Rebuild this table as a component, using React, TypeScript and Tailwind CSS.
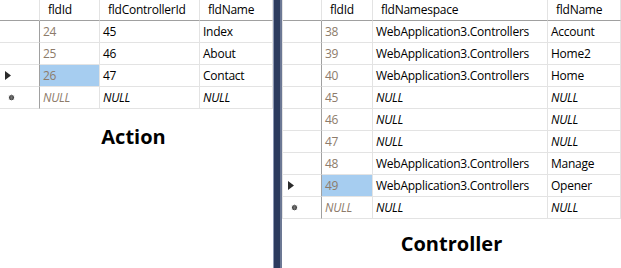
import type { ReactNode } from 'react';

type Cell = { text: string; null?: boolean };
type Row = { marker?: 'current' | 'new'; selected?: boolean; cells: Cell[] };

const v = (text: string): Cell => ({ text });
const n: Cell = { text: 'NULL', null: true };

const actionRows: Row[] = [
  { cells: [v('24'), v('45'), v('Index')] },
  { cells: [v('25'), v('46'), v('About')] },
  { marker: 'current', selected: true, cells: [v('26'), v('47'), v('Contact')] },
  { marker: 'new', cells: [n, n, n] },
];

const ns = 'WebApplication3.Controllers';
const controllerRows: Row[] = [
  { cells: [v('38'), v(ns), v('Account')] },
  { cells: [v('39'), v(ns), v('Home2')] },
  { cells: [v('40'), v(ns), v('Home')] },
  { cells: [v('45'), n, n] },
  { cells: [v('46'), n, n] },
  { cells: [v('47'), n, n] },
  { cells: [v('48'), v(ns), v('Manage')] },
  { marker: 'current', selected: true, cells: [v('49'), v(ns), v('Opener')] },
  { marker: 'new', cells: [n, n, n] },
];

const Marker = ({ kind }: { kind?: 'current' | 'new' }) => {
  if (kind === 'current')
    return (
      <svg width="6" height="9" viewBox="0 0 6 9" className="ml-[5px]">
        <path d="M0 0 L6 4.5 L0 9 Z" fill="#2b2b2b" />
      </svg>
    );
  if (kind === 'new')
    return (
      <svg width="7" height="7" viewBox="0 0 7 7" className="ml-[8px]">
        <circle cx="3.5" cy="3.5" r="2.6" fill="#444" />
        <path d="M3.5 0.5 V6.5 M0.8 2 L6.2 5 M0.8 5 L6.2 2" stroke="#777" strokeWidth="0.8" />
      </svg>
    );
  return null;
};

const Grid = ({
  cols,
  headers,
  rows,
}: {
  cols: string;
  headers: string[];
  rows: Row[];
}) => {
  const head: ReactNode[] = [
    <div key="h0" className="h-[21px] border-b border-r border-b-[#a0a0a0] border-r-[#e3e3e3]" />,
    ...headers.map((h) => (
      <div
        key={h}
        className="h-[21px] pl-[8px] pt-[2px] border-b border-r border-b-[#a0a0a0] border-r-[#e3e3e3] text-black"
      >
        {h}
      </div>
    )),
  ];
  return (
    <div className={`grid ${cols} text-[12px] leading-[16px] tracking-[-0.25px]`}>
      {head}
      {rows.map((r, i) => [
        <div
          key={`m${i}`}
          className="h-[22px] flex items-center border-b border-r border-b-[#e3e3e3] border-r-[#a0a0a0]"
        >
          <Marker kind={r.marker} />
        </div>,
        ...r.cells.map((c, j) => (
          <div
            key={`c${i}-${j}`}
            className={`h-[22px] pl-[3px] pt-[3px] border-b border-r border-[#e3e3e3] whitespace-nowrap overflow-hidden ${
              j === 0 ? 'text-[#8d7b6a]' : 'text-black'
            } ${c.null ? 'italic' : ''} ${r.selected && j === 0 ? 'bg-[#a6cdf0]' : ''}`}
          >
            {c.text}
          </div>
        )),
      ])}
    </div>
  );
};

export default function App() {
  return (
    <div
      className="flex w-[621px] h-[268px] bg-white overflow-hidden"
      style={{ fontFamily: '"Open Sans", "Noto Sans", sans-serif' }}
    >
      <div className="w-[273px] shrink-0 flex flex-col">
        <Grid
          cols="grid-cols-[40px_60px_100px_73px]"
          headers={['fldId', 'fldControllerId', 'fldName']}
          rows={actionRows}
        />
        <div className="mt-[14px] text-center text-[20px] font-bold text-black leading-[28px] pr-[6px]">
          Action
        </div>
      </div>
      <div className="w-[9px] shrink-0 flex">
        <div className="w-[1px] bg-[#8b97b3]" />
        <div className="w-[6px] bg-[#2c3b5e]" />
        <div className="w-[2px] bg-[#6c7894]" />
      </div>
      <div className="flex-1 flex flex-col">
        <div className="border-l border-[#e3e3e3]">
          <Grid
            cols="grid-cols-[39px_51px_175px_73px]"
            headers={['fldId', 'fldNamespace', 'fldName']}
            rows={controllerRows}
          />
        </div>
        <div className="mt-[11px] text-center text-[20px] font-bold text-black leading-[28px]">
          Controller
        </div>
      </div>
    </div>
  );
}
